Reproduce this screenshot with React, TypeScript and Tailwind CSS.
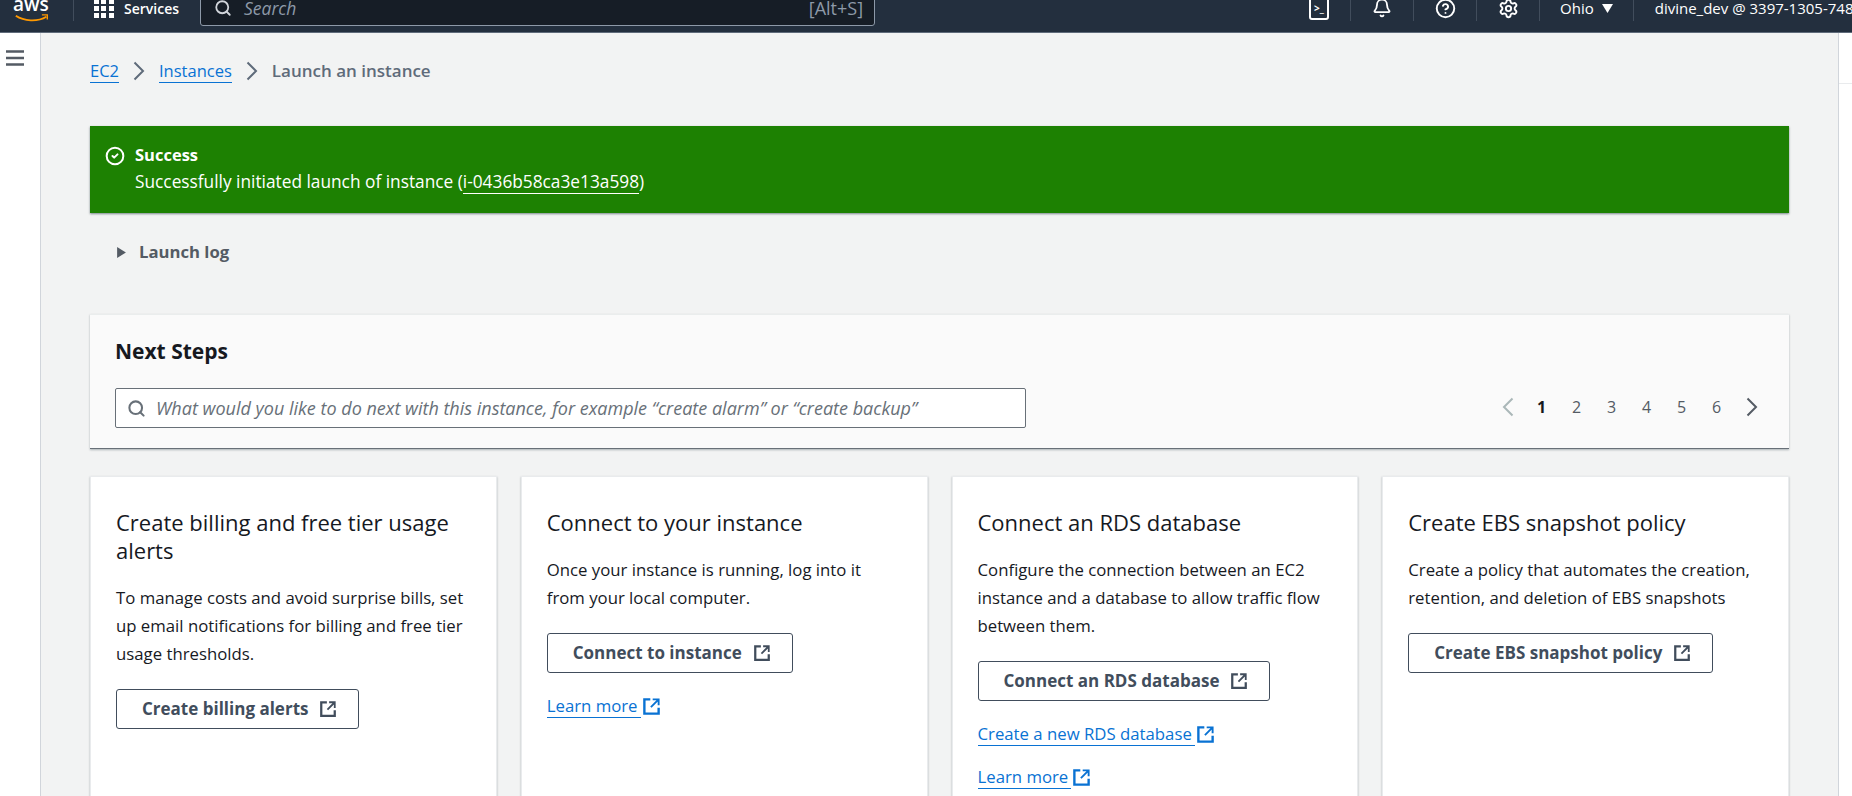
import React from 'react';
import { Search, Bell, CircleHelp, Settings, CircleCheck } from 'lucide-react';

const FONT = "font-['Open_Sans','Liberation_Sans',sans-serif]";

const ExternalIcon = ({ className }: { className?: string }) => (
  <svg viewBox="0 0 16 16" fill="none" stroke="currentColor" strokeWidth="2" className={className}>
    <path d="M7 2H2v12h12V9" />
    <path d="M9 2h5v5M14 2 7.5 8.5" strokeWidth="1.6" />
  </svg>
);

const Chevron = ({ left, className }: { left?: boolean; className?: string }) => (
  <svg viewBox="0 0 12 20" fill="none" stroke="currentColor" strokeWidth="2" className={`w-[12px] h-[20px] shrink-0 ${className ?? ''}`}>
    <path d={left ? 'M10.5 1.5 2 10l8.5 8.5' : 'M1.5 1.5 10 10l-8.5 8.5'} />
  </svg>
);

const TextLink = ({ children }: { children: React.ReactNode }) => (
  <a className="inline-flex items-center text-[#0972d3] text-[16.75px] leading-[28px]">
    <span className="border-b border-[#0972d3] leading-[23px] pr-[3px]">{children}</span>
    <ExternalIcon className="w-[19px] h-[19px] ml-px" />
  </a>
);

const ActionButton = ({ label }: { label: string }) => (
  <button className="inline-flex items-center gap-[11px] h-[40px] pl-[25px] pr-[21px] mb-[2px] border border-[#414d5c] rounded-[3px] bg-white text-[#414d5c] text-[17px] font-bold">
    {label}
    <ExternalIcon className="w-[18px] h-[18px]" />
  </button>
);

const NavDivider = () => <div className="w-px h-[26px] bg-[#414d5c] shrink-0" />;

const NavIcon = ({ children }: { children: React.ReactNode }) => (
  <div className="w-[62px] shrink-0 flex justify-center">{children}</div>
);

const TopNav = () => (
  <header className="h-[33px] shrink-0 bg-[#232f3e] border-b border-[#5f6b7a] overflow-hidden text-white">
    <div className="flex items-center h-[40px] -mt-[12px]">
      <div className="w-[60px] shrink-0 ml-[13px] text-[19px] leading-none relative h-[20px]">
        <span className="absolute left-0 -top-[3px] font-semibold">aws</span>
        <svg viewBox="0 0 40 10" className="absolute left-0 top-[16px] w-[38px] h-[9px]" fill="none">
          <path d="M2 2c9 6 24 7 34 1" stroke="#ff9900" strokeWidth="2" />
          <path d="M31 1h6v5" stroke="#ff9900" strokeWidth="1.5" />
        </svg>
      </div>
      <NavDivider />
      <div className="grid grid-cols-3 gap-[2px] w-[20px] shrink-0 ml-[20px]">
        {Array.from({ length: 9 }).map((_, i) => (
          <span key={i} className="w-[5px] h-[5px] bg-white" />
        ))}
      </div>
      <span className="ml-[10px] shrink-0 text-[14px] font-semibold">Services</span>
      <div className="ml-[21px] w-[675px] shrink-0 h-[36px] bg-[#161d26] border border-[#8d99a8] rounded-[3px] flex items-center pl-[13px] pr-[11px]">
        <Search className="w-[18px] h-[18px]" strokeWidth={2.4} color="#d1d5db" />
        <span className="ml-[12px] italic text-[#8d99a8] text-[17.5px]">Search</span>
        <span className="ml-auto text-[#8d99a8] text-[18px]">[Alt+S]</span>
      </div>
      <div className="ml-[434px] shrink-0 flex items-center">
        <div className="w-[20px] h-[24px] border-2 border-white rounded-[3px] mr-[21px] flex items-center justify-center text-[10px] font-bold leading-none">
          &gt;_
        </div>
        <NavDivider />
        <NavIcon><Bell className="w-[20px] h-[20px]" strokeWidth={2.2} /></NavIcon>
        <NavDivider />
        <NavIcon><CircleHelp className="w-[21px] h-[21px]" strokeWidth={2.2} /></NavIcon>
        <NavDivider />
        <NavIcon><Settings className="w-[21px] h-[21px]" strokeWidth={2.2} /></NavIcon>
        <NavDivider />
        <span className="ml-[20px] text-[15px] font-medium">Ohio</span>
        <svg viewBox="0 0 10 8" className="w-[11px] h-[9px] ml-[8px]" fill="white"><path d="M0 0h10L5 8z" /></svg>
        <div className="ml-[20px]"><NavDivider /></div>
        <span className="ml-[21px] text-[15px] font-medium whitespace-nowrap">divine_dev @ 3397-1305-7483</span>
      </div>
    </div>
  </header>
);

const Card = ({ title, body, children }: { title: string; body: string; children: React.ReactNode }) => (
  <div className="bg-white border border-[#e9ebed] shadow-[0_1px_2px_rgba(0,28,36,0.3)] pl-[25px] pr-[27px] pt-[31px] h-[400px]">
    <h3 className="text-[22px] leading-[28px] text-[#16191f]">{title}</h3>
    <p className="mt-[20px] text-[16.75px] leading-[28px] text-[#16191f]">{body}</p>
    <div className="mt-[21px] flex flex-col items-start gap-[19px]">{children}</div>
  </div>
);

export default function App() {
  return (
    <div className={`${FONT} h-[796px] w-[1852px] overflow-hidden flex flex-col bg-[#f2f3f3]`}>
      <TopNav />
      <div className="flex flex-1 min-h-0">
        <aside className="w-[41px] shrink-0 bg-white border-r border-[#d1d5db] pt-[17px] pl-[6px]">
          <svg viewBox="0 0 18 16" className="w-[18px] h-[16px]" stroke="#545b64" strokeWidth="2.4">
            <path d="M0 1.5h18M0 8h18M0 14.5h18" />
          </svg>
        </aside>
        <main className="flex-1 min-w-0 px-[49px]">
          <nav className="flex items-center h-[34px] mt-[21px] text-[16.5px]">
            <a className="text-[#0972d3] border-b border-[#0972d3] leading-[22px]">EC2</a>
            <Chevron className="mx-[14px] text-[#5f6b7a]" />
            <a className="text-[#0972d3] border-b border-[#0972d3] leading-[22px]">Instances</a>
            <Chevron className="mx-[14px] text-[#5f6b7a]" />
            <span className="text-[#5f6b7a] font-semibold text-[17px]">Launch an instance</span>
          </nav>
          <div className="mt-[38px] h-[87px] bg-[#1d8102] shadow-[0_1px_2px_rgba(0,28,36,0.5)] flex text-white px-[15px] pt-[15px]">
            <CircleCheck className="w-[20px] h-[20px] mt-[5px]" strokeWidth={2.4} />
            <div className="ml-[10px] text-[17.3px] leading-[27px]">
              <div className="font-bold text-[16.5px]">Success</div>
              <div>
                Successfully initiated launch of instance (<span className="border-b border-white">i-0436b58ca3e13a598</span>)
              </div>
            </div>
          </div>
          <div className="mt-[26px] h-[26px] flex items-center pl-[27px] text-[#545b64] font-bold text-[16.7px]">
            <svg viewBox="0 0 8 10" className="w-[9px] h-[11px] mr-[13px]" fill="#545b64"><path d="M0 0l8 5-8 5z" /></svg>
            Launch log
          </div>
          <section className="mt-[49px] h-[135px] bg-[#fafafa] border-t border-[#eaeded] border-b-[#687078] border-b shadow-[0_1px_2px_rgba(0,28,36,0.3)] px-[25px] pt-[21px]">
            <h2 className="text-[21px] leading-[30px] font-bold text-[#16191f]">Next Steps</h2>
            <div className="mt-[22px] flex items-center justify-between">
              <div className="w-[911px] h-[40px] bg-white border border-[#687078] rounded-[2px] flex items-center pl-[11px]">
                <Search className="w-[19px] h-[19px] text-[#687078]" strokeWidth={2.6} />
                <span className="ml-[10px] italic text-[18px] text-[#687078] whitespace-nowrap">
                  What would you like to do next with this instance, for example “create alarm” or “create backup”
                </span>
              </div>
              <div className="flex items-center text-[16px] text-[#545b64] mr-[6px] -mt-[2px]">
                <Chevron left className="text-[#aab7b8] mr-[10px]" />
                <span className="w-[35px] text-center font-bold text-[#16191f]">1</span>
                <span className="w-[35px] text-center">2</span>
                <span className="w-[35px] text-center">3</span>
                <span className="w-[35px] text-center">4</span>
                <span className="w-[35px] text-center">5</span>
                <span className="w-[35px] text-center">6</span>
                <Chevron className="ml-[12px]" />
              </div>
            </div>
          </section>
          <div className="mt-[27px] grid grid-cols-4 gap-[24px]">
            <Card
              title="Create billing and free tier usage alerts"
              body="To manage costs and avoid surprise bills, set up email notifications for billing and free tier usage thresholds."
            >
              <ActionButton label="Create billing alerts" />
            </Card>
            <Card
              title="Connect to your instance"
              body="Once your instance is running, log into it from your local computer."
            >
              <ActionButton label="Connect to instance" />
              <TextLink>Learn more</TextLink>
            </Card>
            <Card
              title="Connect an RDS database"
              body="Configure the connection between an EC2 instance and a database to allow traffic flow between them."
            >
              <ActionButton label="Connect an RDS database" />
              <TextLink>Create a new RDS database</TextLink>
              <TextLink>Learn more</TextLink>
            </Card>
            <Card
              title="Create EBS snapshot policy"
              body="Create a policy that automates the creation, retention, and deletion of EBS snapshots"
            >
              <ActionButton label="Create EBS snapshot policy" />
            </Card>
          </div>
        </main>
        <aside className="w-[14px] shrink-0 bg-white border-l border-[#d1d5db]">
          <div className="h-[51px] border-b border-[#e9ebed]" />
        </aside>
      </div>
    </div>
  );
}
